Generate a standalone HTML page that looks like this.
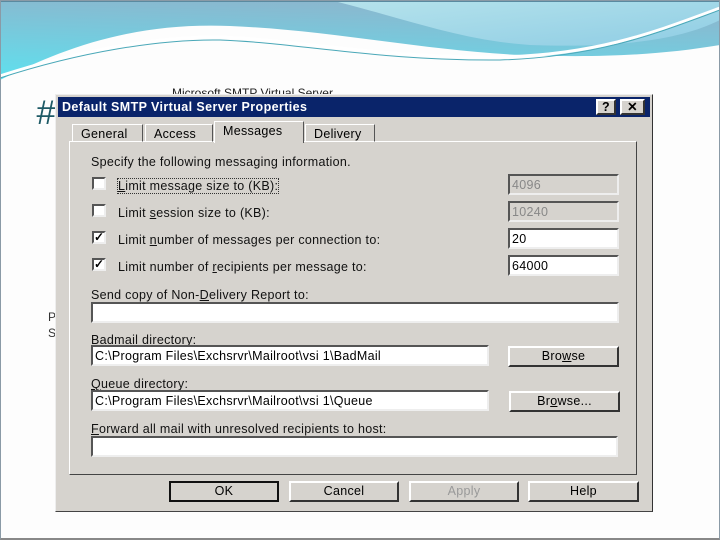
<!DOCTYPE html>
<html><head><style>
*{margin:0;padding:0;box-sizing:border-box}
body{width:720px;height:540px;overflow:hidden;background:#fdfdfd;position:relative;font-family:"Liberation Sans",sans-serif}
.a{position:absolute}
.frame{left:0;top:0;width:720px;height:540px;border:1px solid #8a9aa6;border-bottom:2px solid #888}
.t{position:absolute;font-size:12.5px;color:#111;white-space:nowrap;letter-spacing:.3px;margin-top:3px}
.in{position:absolute;background:#fff;border:2px solid;border-color:#555 #eee #eee #555;font-size:12.5px;padding:1px 2px 0;line-height:16px;letter-spacing:.3px}
.dis{background:#d6d3ce;color:#888}
.cb{position:absolute;width:14px;height:13px;background:#fff;border:2px solid;border-color:#555 #eee #eee #555;font-size:12px;line-height:9px;font-weight:bold;text-align:center}
.btn{position:absolute;background:#d6d3ce;border:2px solid;border-color:#fff #333 #333 #fff;font-size:12.5px;text-align:center;line-height:17px;letter-spacing:.3px}
.tab{position:absolute;top:124px;height:18px;border:1px solid;border-color:#fff #555 transparent #fff;font-size:12.5px;padding:2px 8px 0;letter-spacing:.3px}
u{text-decoration:underline}
</style></head><body>
<svg class="a" style="left:0;top:0" width="720" height="100">
<defs>
<linearGradient id="g1" x1="0" y1="1" x2="0.3" y2="0"><stop offset="0" stop-color="#5fe0ee"/><stop offset="1" stop-color="#8ab8cf"/></linearGradient>
<linearGradient id="g2" x1="0" y1="0" x2="1" y2="1"><stop offset="0" stop-color="#b6e3ec"/><stop offset="1" stop-color="#8fcde4"/></linearGradient>
</defs>
<path d="M0 0 H720 V45 C660 55 600 58 520 55 C420 50 330 30 230 26 C130 22 60 50 0 80 Z" fill="url(#g1)"/>
<path d="M330 0 H720 V20 C680 40 620 48 530 45 C460 40 410 20 330 0Z" fill="url(#g2)"/>
<path d="M0 76 C80 50 160 36 220 37 C300 40 380 58 500 57 C600 55 660 30 720 8" stroke="#fff" stroke-width="3" fill="none"/>
<path d="M0 78 C80 52 160 39 220 40 C300 43 380 61 500 60 C600 57 660 32 720 10" stroke="#4aa8b8" stroke-width="1" fill="none"/>
</svg>
<div class="a" style="left:0;top:1px;width:720px;height:1px;background:#5a8aa0"></div>
<div class="frame a"></div>
<div class="a" style="left:172px;top:86px;font-size:12px;color:#222">Microsoft SMTP Virtual Server</div>
<div class="a" style="left:36px;top:94px;font-size:34px;color:#1e5a66;font-style:italic">#</div>
<div class="a" style="left:48px;top:310px;font-size:12px;color:#333">P</div>
<div class="a" style="left:48px;top:326px;font-size:12px;color:#333">S</div>
<div class="a" style="left:55px;top:94px;width:598px;height:418px;background:#d6d3ce;border:1px solid;border-color:#eee #333 #444 #eee"></div>
<div class="a" style="left:58px;top:97px;width:592px;height:20px;background:#0a246a"></div>
<div class="a" style="left:62px;top:100px;color:#fff;font-weight:bold;font-size:12.5px;letter-spacing:.4px">Default SMTP Virtual Server Properties</div>
<div class="btn" style="left:596px;top:99px;width:20px;height:16px;font-weight:bold;line-height:12px">?</div>
<div class="btn" style="left:620px;top:99px;width:25px;height:16px;font-weight:bold;line-height:12px">✕</div>
<div class="a" style="left:69px;top:141px;width:568px;height:334px;border:1px solid;border-color:#fff #444 #444 #fff"></div>
<div class="tab" style="left:72px;width:71px">General</div>
<div class="tab" style="left:145px;width:68px">Access</div>
<div class="tab" style="left:214px;top:121px;height:22px;width:90px;background:#d6d3ce;border-bottom:none;padding-top:2px">Messages</div>
<div class="tab" style="left:305px;width:70px">Delivery</div>
<div class="t" style="left:91px;top:152px">Specify the following messaging information.</div>
<div class="cb" style="left:92px;top:177px"></div><div class="t" style="left:118px;top:176px;outline:1px dotted #333"><u>L</u>imit message size to (KB):</div>
<div class="cb" style="left:92px;top:204px"></div><div class="t" style="left:118px;top:203px">Limit <u>s</u>ession size to (KB):</div>
<div class="cb" style="left:92px;top:231px">✓</div><div class="t" style="left:118px;top:230px">Limit <u>n</u>umber of messages per connection to:</div>
<div class="cb" style="left:92px;top:258px">✓</div><div class="t" style="left:118px;top:257px">Limit number of <u>r</u>ecipients per message to:</div>
<div class="in dis" style="left:508px;top:174px;width:111px;height:21px">4096</div>
<div class="in dis" style="left:508px;top:201px;width:111px;height:21px">10240</div>
<div class="in" style="left:508px;top:228px;width:111px;height:21px">20</div>
<div class="in" style="left:508px;top:255px;width:111px;height:21px">64000</div>
<div class="t" style="left:91px;top:285px">Send copy of Non-<u>D</u>elivery Report to:</div>
<div class="in" style="left:91px;top:302px;width:528px;height:21px"></div>
<div class="t" style="left:91px;top:330px"><u>B</u>admail directory:</div>
<div class="in" style="left:91px;top:345px;width:398px;height:21px">C:\Program Files\Exchsrvr\Mailroot\vsi 1\BadMail</div>
<div class="btn" style="left:508px;top:346px;width:111px;height:21px">Bro<u>w</u>se</div>
<div class="t" style="left:91px;top:374px"><u>Q</u>ueue directory:</div>
<div class="in" style="left:91px;top:390px;width:398px;height:21px">C:\Program Files\Exchsrvr\Mailroot\vsi 1\Queue</div>
<div class="btn" style="left:509px;top:391px;width:111px;height:21px">Br<u>o</u>wse...</div>
<div class="t" style="left:91px;top:419px"><u>F</u>orward all mail with unresolved recipients to host:</div>
<div class="in" style="left:91px;top:436px;width:527px;height:21px"></div>
<div class="btn" style="left:169px;top:481px;width:110px;height:21px;border:2px solid #111">OK</div>
<div class="btn" style="left:289px;top:481px;width:110px;height:21px">Cancel</div>
<div class="btn" style="left:409px;top:481px;width:110px;height:21px;color:#999">Apply</div>
<div class="btn" style="left:528px;top:481px;width:111px;height:21px">Help</div>
</body></html>
